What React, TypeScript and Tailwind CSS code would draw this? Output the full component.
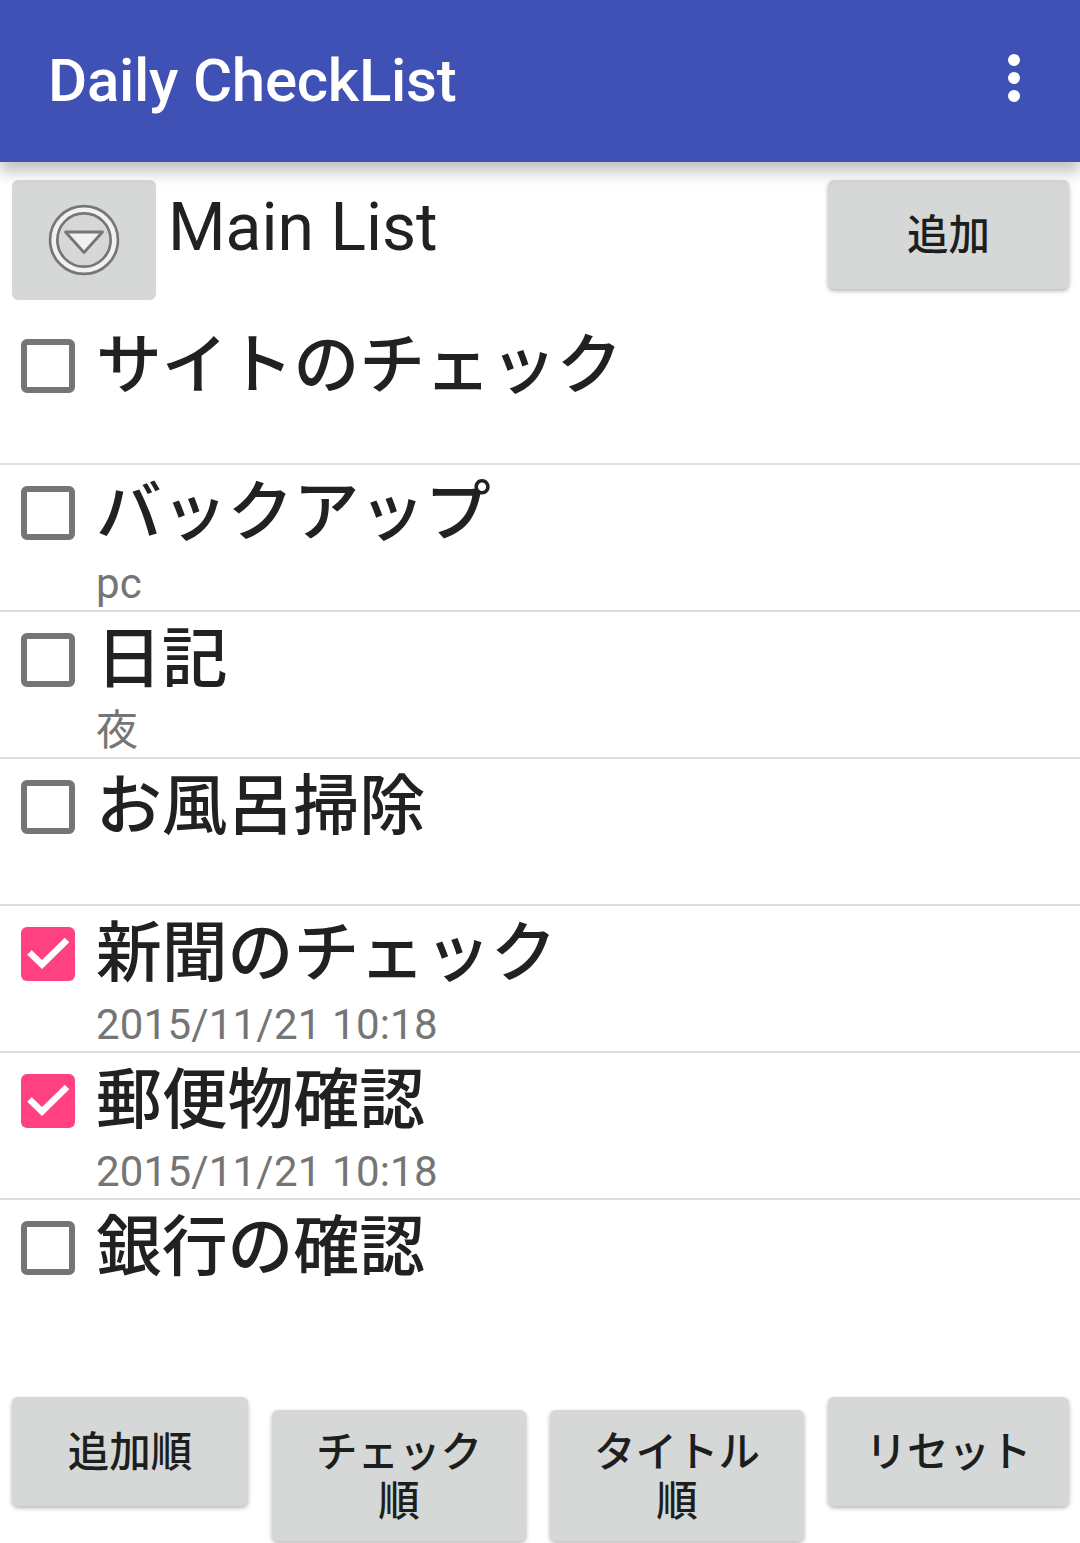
import { clsx } from "clsx";

const items = [
  { title: "サイトのチェック", note: "", checked: false },
  { title: "バックアップ", note: "pc", checked: false },
  { title: "日記", note: "夜", checked: false },
  { title: "お風呂掃除", note: "", checked: false },
  { title: "新聞のチェック", note: "2015/11/21 10:18", checked: true },
  { title: "郵便物確認", note: "2015/11/21 10:18", checked: true },
  { title: "銀行の確認", note: "", checked: false },
];

function Button({ label, className }: { label: string; className?: string }) {
  return (
    <button
      type="button"
      className={clsx(
        "flex justify-center rounded-md bg-[#d6d8d7] text-[41.5px] font-medium leading-[49px] text-[#1d1f1e] shadow-[0_2px_4px_rgba(0,0,0,0.3)]",
        className,
      )}
    >
      {label}
    </button>
  );
}

function CheckBox({ checked }: { checked: boolean }) {
  if (!checked) {
    return <span className="size-[54px] rounded-md border-6 border-[#757575]" />;
  }
  return (
    <span className="size-[54px] rounded-md bg-[#ff4081]">
      <svg viewBox="0 0 54 54" className="size-full" fill="none" stroke="#fff" strokeWidth="6.5">
        <path d="M8.5 25.5 21 37.5 46 13" />
      </svg>
    </span>
  );
}

function DropDownIcon() {
  return (
    <svg viewBox="0 0 72 72" className="size-[72px]" fill="none">
      <circle cx="36" cy="36" r="30.3" stroke="#757776" strokeWidth="10" />
      <circle cx="36" cy="36" r="30.3" stroke="#f0f1f0" strokeWidth="4.6" />
      <path
        d="M17.5 28h37L36 48.5z"
        fill="#f0f1f0"
        stroke="#757776"
        strokeWidth="2.8"
        strokeLinejoin="round"
      />
    </svg>
  );
}

export default function App() {
  return (
    <div className="flex h-[1543px] w-[1080px] flex-col overflow-hidden bg-white font-[Roboto,'Noto_Sans_CJK_JP',sans-serif] text-[#212121]">
      <header className="z-10 flex h-[162px] shrink-0 items-center justify-between bg-[#3f51b5] pl-12 pr-[60px] shadow-[0_10px_14px_rgba(0,0,0,0.24)]">
        <h1 className="text-[60px] font-medium leading-none tracking-[-0.25px] text-white">
          Daily CheckList
        </h1>
        <div className="mb-1.5 flex flex-col gap-1.5">
          <span className="size-3 rounded-full bg-white" />
          <span className="size-3 rounded-full bg-white" />
          <span className="size-3 rounded-full bg-white" />
        </div>
      </header>

      <div className="flex h-[156px] shrink-0 items-start pl-3 pr-[11px] pt-[18px]">
        <button
          type="button"
          className="flex h-[120px] w-36 items-center justify-center rounded-md bg-[#d6d8d7]"
        >
          <DropDownIcon />
        </button>
        <h2 className="ml-3 flex-1 pt-[9px] text-[66px] leading-[78px]">Main List</h2>
        <Button label="追加" className="h-[109px] w-[241px] pt-[31px]" />
      </div>

      <ul className="flex-1">
        {items.map((item) => (
          <li
            key={item.title}
            className="flex h-[147px] border-b-2 border-[#dedede] pl-[21px] last:border-b-0"
          >
            <div className="flex pt-[21px]">
              <CheckBox checked={item.checked} />
            </div>
            <div className="ml-[21px]">
              <p className="text-[65.8px] font-medium leading-[96px]">{item.title}</p>
              <p className="text-[42px] leading-[45px] tracking-[0.2px] text-[#757575]">
                {item.note}
              </p>
            </div>
          </li>
        ))}
      </ul>

      <footer className="flex h-[146px] shrink-0 items-start gap-6 pl-3 pr-[11px]">
        <Button label="追加順" className="h-[109px] w-[236px] pt-[31px]" />
        <Button label="チェック順" className="mt-[13px] h-[131px] w-[254px] px-11 pt-[18px]" />
        <Button label="タイトル順" className="mt-[13px] h-[131px] w-[254px] px-11 pt-[18px]" />
        <Button label="リセット" className="h-[109px] w-[241px] pt-[31px]" />
      </footer>
    </div>
  );
}
